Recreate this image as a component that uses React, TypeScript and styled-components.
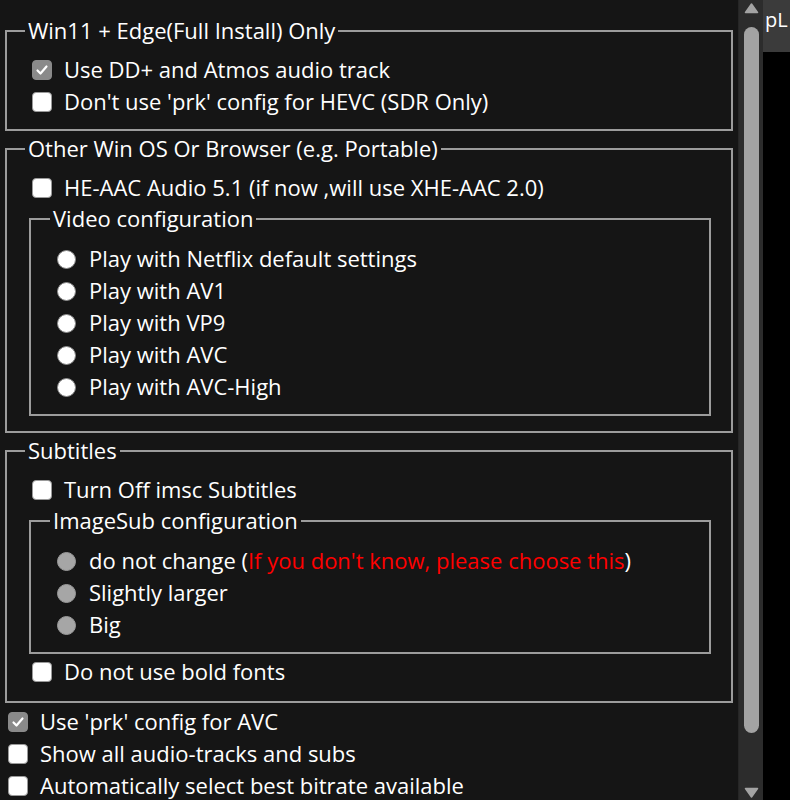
import React from "react";
import styled, { createGlobalStyle } from "styled-components";

const GlobalStyle = createGlobalStyle`
  html, body { margin: 0; padding: 0; background: #000; }
  body { font-family: "Open Sans", "Noto Sans", sans-serif; color: #fff; }
  * { box-sizing: border-box; }
`;

const Screen = styled.div`
  display: flex;
  width: 790px;
  height: 800px;
  overflow: hidden;
  background: #000;
`;

const Panel = styled.div`
  width: 738px;
  flex: none;
  height: 800px;
  overflow: hidden;
  background: #151515;
  padding: 16px 5px 0 5px;
  display: flex;
  flex-direction: column;
  gap: 3px;
  font-size: 22px;
`;

const Group = styled.fieldset<{ $pt: number; $pb: number; $pl: number; $pr: number }>`
  flex: none;
  margin: 0;
  min-width: 0;
  border: 2px solid #9c9c9c;
  padding: ${(p) => p.$pt}px ${(p) => p.$pr}px ${(p) => p.$pb}px ${(p) => p.$pl}px;
  display: block;
`;

const Legend = styled.legend`
  padding: 0 3px 2px;
  margin-left: -4px;
  line-height: 28px;
  font-size: 22px;
  color: #fff;
`;

const OptionList = styled.div`
  flex: none;
  display: flex;
  flex-direction: column;
`;

const Row = styled.label<{ $mt?: number }>`
  flex: none;
  display: flex;
  align-items: center;
  height: 32px;
  gap: 12px;
  margin-left: 3px;
  margin-top: ${(p) => p.$mt ?? 0}px;
  white-space: nowrap;
`;

const RadioRow = styled(Row)`
  gap: 13px;
`;

const Text = styled.span`
  line-height: 30px;
  padding-bottom: 2px;
`;

const Box = styled.span<{ $checked?: boolean }>`
  width: 20px;
  height: 20px;
  flex: none;
  border-radius: 4px;
  background: ${(p) => (p.$checked ? "#8a8a8a" : "#ffffff")};
  border: 1px solid ${(p) => (p.$checked ? "#8a8a8a" : "#9a9a9a")};
  display: flex;
  align-items: center;
  justify-content: center;
`;

const Dot = styled.span<{ $disabled?: boolean }>`
  width: 19px;
  height: 19px;
  flex: none;
  border-radius: 50%;
  background: ${(p) => (p.$disabled ? "#a6a6a6" : "#ffffff")};
  border: 1px solid ${(p) => (p.$disabled ? "#9a9a9a" : "#8a8a8a")};
`;

const Warn = styled.span`
  color: #ff0000;
`;

const Scrollbar = styled.div`
  width: 25px;
  flex: none;
  height: 800px;
  background: #2c2c2c;
  border-left: 1px solid #262626;
  display: flex;
  flex-direction: column;
  align-items: center;
`;

const Arrow = styled.div`
  height: 16px;
  flex: none;
  display: flex;
  align-items: center;
  justify-content: center;
`;

const Track = styled.div`
  flex: 1;
  padding: 11px 0 51px;
  display: flex;
  justify-content: center;
`;

const Thumb = styled.div`
  width: 15px;
  height: 100%;
  border-radius: 8px;
  background: #a3a3a3;
`;

const Side = styled.div`
  flex: 1;
  background: #000;
  display: flex;
  flex-direction: column;
`;

const SideTab = styled.div`
  height: 52px;
  background: #3b3b3b;
  color: #fff;
  font-size: 20px;
  padding: 9px 0 0 2px;
  line-height: 22px;
  overflow: hidden;
  white-space: nowrap;
`;

const Check = () => (
  <svg width="14" height="14" viewBox="0 0 14 14">
    <path d="M2.5 7.5 L5.5 10.5 L11.5 3.5" fill="none" stroke="#fff" strokeWidth="2.2" strokeLinecap="round" strokeLinejoin="round" />
  </svg>
);

const Tri = ({ down }: { down?: boolean }) => (
  <svg width="15" height="11" viewBox="0 0 15 11">
    <path
      d={down ? "M1.5 1.5 L13.5 1.5 L7.5 10 Z" : "M7.5 1 L13.5 9.5 L1.5 9.5 Z"}
      fill="#a3a3a3"
      stroke="#a3a3a3"
      strokeWidth="1.5"
      strokeLinejoin="round"
    />
  </svg>
);

const CheckItem = ({ checked, children, mt }: { checked?: boolean; children: React.ReactNode; mt?: number }) => (
  <Row $mt={mt}>
    <Box $checked={checked}>{checked && <Check />}</Box>
    <Text>{children}</Text>
  </Row>
);

const RadioItem = ({ disabled, children }: { disabled?: boolean; children: React.ReactNode }) => (
  <RadioRow>
    <Dot $disabled={disabled} />
    <Text>{children}</Text>
  </RadioRow>
);

export default function App() {
  return (
    <>
      <GlobalStyle />
      <Screen>
        <Panel>
          <Group $pt={8} $pb={11} $pl={22} $pr={20}>
            <Legend>Win11 + Edge(Full Install) Only</Legend>
            <CheckItem checked>Use DD+ and Atmos audio track</CheckItem>
            <CheckItem>Don't use 'prk' config for HEVC (SDR Only)</CheckItem>
          </Group>
          <Group $pt={8} $pb={15} $pl={22} $pr={20}>
            <Legend>Other Win OS Or Browser (e.g. Portable)</Legend>
            <CheckItem>HE-AAC Audio 5.1 (if now ,will use XHE-AAC 2.0)</CheckItem>
            <Group $pt={9} $pb={11} $pl={23} $pr={20}>
              <Legend>Video configuration</Legend>
              <RadioItem>Play with Netflix default settings</RadioItem>
              <RadioItem>Play with AV1</RadioItem>
              <RadioItem>Play with VP9</RadioItem>
              <RadioItem>Play with AVC</RadioItem>
              <RadioItem>Play with AVC-High</RadioItem>
            </Group>
          </Group>
          <Group $pt={8} $pb={13} $pl={22} $pr={20}>
            <Legend>Subtitles</Legend>
            <CheckItem>Turn Off imsc Subtitles</CheckItem>
            <Group $pt={9} $pb={11} $pl={23} $pr={20}>
              <Legend>ImageSub configuration</Legend>
              <RadioItem disabled>
                do not change (<Warn>If you don't know, please choose this</Warn>)
              </RadioItem>
              <RadioItem disabled>Slightly larger</RadioItem>
              <RadioItem disabled>Big</RadioItem>
            </Group>
            <CheckItem mt={2}>Do not use bold fonts</CheckItem>
          </Group>
          <OptionList>
            <CheckItem checked>Use 'prk' config for AVC</CheckItem>
            <CheckItem>Show all audio-tracks and subs</CheckItem>
            <CheckItem>Automatically select best bitrate available</CheckItem>
          </OptionList>
        </Panel>
        <Scrollbar>
          <Arrow>
            <Tri />
          </Arrow>
          <Track>
            <Thumb />
          </Track>
          <Arrow>
            <Tri down />
          </Arrow>
        </Scrollbar>
        <Side>
          <SideTab>pL</SideTab>
        </Side>
      </Screen>
    </>
  );
}
